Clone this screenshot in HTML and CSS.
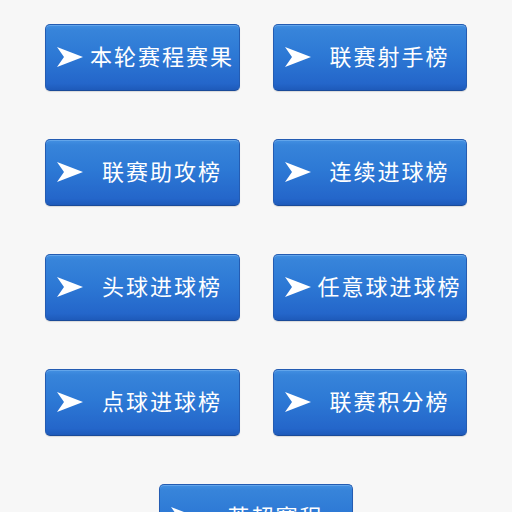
FILE: index.html
```html
<!DOCTYPE html>
<html lang="zh-CN">
<head>
<meta charset="utf-8">
<link rel="stylesheet" href="styles.css">
</head>
<body>
<div class="grid">
  <a class="btn"><svg class="arrow" viewBox="0 0 26 20"><path d="M0 0 L26 10 L0 20 L7 10 Z"/></svg><span class="label">本轮赛程赛果</span></a>
  <a class="btn"><svg class="arrow" viewBox="0 0 26 20"><path d="M0 0 L26 10 L0 20 L7 10 Z"/></svg><span class="label">联赛射手榜</span></a>
  <a class="btn"><svg class="arrow" viewBox="0 0 26 20"><path d="M0 0 L26 10 L0 20 L7 10 Z"/></svg><span class="label">联赛助攻榜</span></a>
  <a class="btn"><svg class="arrow" viewBox="0 0 26 20"><path d="M0 0 L26 10 L0 20 L7 10 Z"/></svg><span class="label">连续进球榜</span></a>
  <a class="btn"><svg class="arrow" viewBox="0 0 26 20"><path d="M0 0 L26 10 L0 20 L7 10 Z"/></svg><span class="label">头球进球榜</span></a>
  <a class="btn"><svg class="arrow" viewBox="0 0 26 20"><path d="M0 0 L26 10 L0 20 L7 10 Z"/></svg><span class="label">任意球进球榜</span></a>
  <a class="btn"><svg class="arrow" viewBox="0 0 26 20"><path d="M0 0 L26 10 L0 20 L7 10 Z"/></svg><span class="label">点球进球榜</span></a>
  <a class="btn"><svg class="arrow" viewBox="0 0 26 20"><path d="M0 0 L26 10 L0 20 L7 10 Z"/></svg><span class="label">联赛积分榜</span></a>
  <a class="btn wide"><svg class="arrow" viewBox="0 0 26 20"><path d="M0 0 L26 10 L0 20 L7 10 Z"/></svg><span class="label">英超赛程</span></a>
</div>
</body>
</html>
```
FILE: styles.css
```css
html, body {
  margin: 0;
  padding: 0;
  background: #f7f7f7;
  overflow: hidden;
  height: 512px;
}
.grid {
  display: grid;
  grid-template-columns: 195px 194px;
  column-gap: 33px;
  row-gap: 48px;
  justify-content: center;
  padding-top: 24px;
}
.btn {
  box-sizing: border-box;
  height: 67px;
  display: flex;
  align-items: center;
  border: 1px solid #245cb2;
  border-bottom-color: #1a4a98;
  border-radius: 5px;
  background: linear-gradient(to bottom, #4390e2 0%, #3784da 8%, #2d79d5 45%, #2466ca 90%, #1e5aba 100%);
  box-shadow: inset 0 1px 0 rgba(120, 180, 240, 0.6), 0 1px 1px rgba(0,0,0,0.12);
  color: #fff;
  text-decoration: none;
}
.wide {
  grid-column: 1 / span 2;
  justify-self: center;
  width: 194px;
}
.arrow {
  width: 26px;
  height: 20px;
  margin-left: 11px;
  margin-bottom: 2px;
  flex: none;
  fill: #fff;
}
.label {
  flex: 1;
  text-align: center;
  font-family: "Noto Sans CJK SC", "Noto Sans", sans-serif;
  font-size: 22px;
  letter-spacing: 2px;
  padding-left: 2px;
  padding-bottom: 5px;
  line-height: 1;
  white-space: nowrap;
}
```
